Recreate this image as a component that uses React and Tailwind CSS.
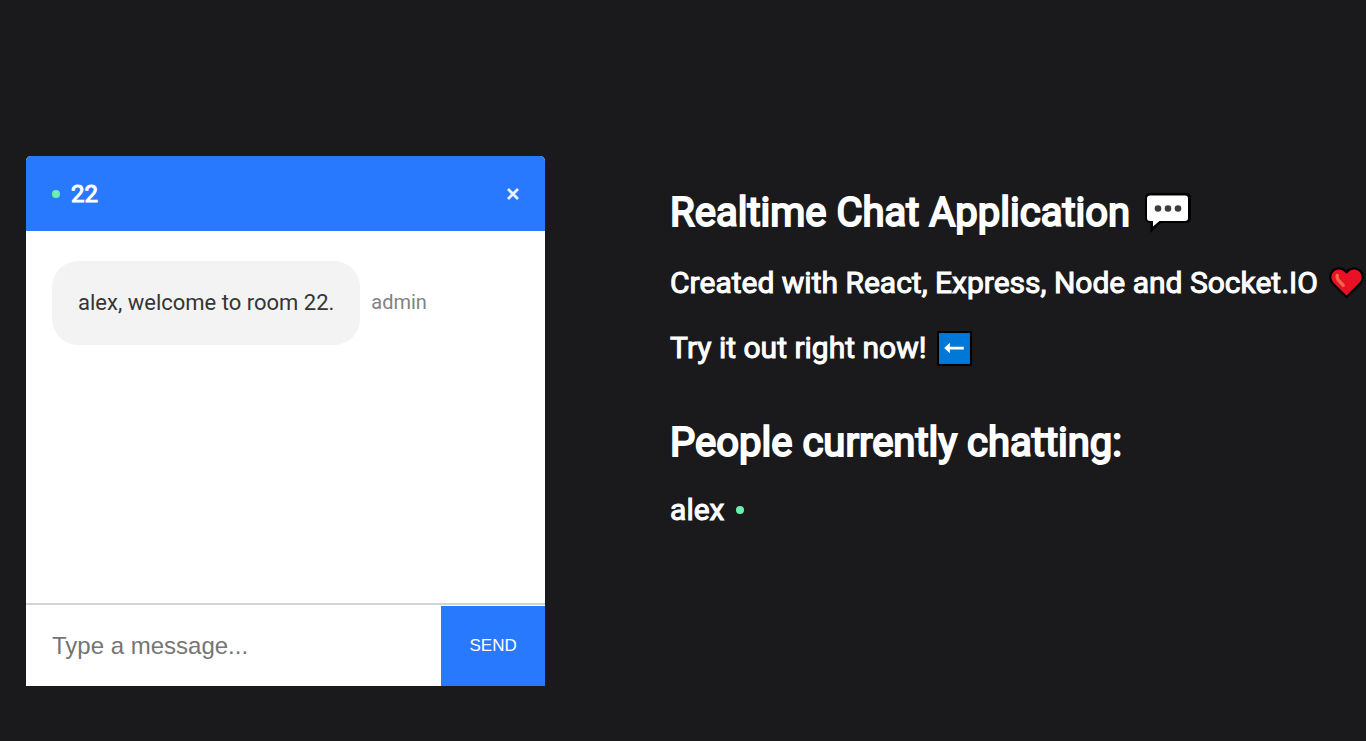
import { useState } from "react";

const people = ["alex"];
const messages = [{ id: 1, user: "admin", text: "alex, welcome to room 22." }];

function OnlineDot() {
  return <span className="size-2 shrink-0 rounded-full bg-[#69f0ae]" />;
}

function CloseIcon() {
  return (
    <svg className="size-3" viewBox="0 0 12 12" fill="none" stroke="#ffffff" strokeOpacity="0.9" strokeWidth="2.8" aria-hidden="true">
      <path d="M1 1l10 10M11 1L1 11" />
    </svg>
  );
}

function SpeechIcon() {
  return (
    <svg className="h-10 w-[46px] shrink-0" viewBox="0 0 46 40" aria-hidden="true">
      <path d="M5 0h36q5 0 5 5v20q0 5-5 5H16L5.500 40V30H5q-5 0-5-5V5q0-5 5-5z" fill="#000000" />
      <path d="M5 2.500h35q3 0 3 3v19.500q0 3-3 3H14.500l-6.500 5.500v-5.500H5q-3 0-3-3V5.500q0-3 3-3z" fill="#ffffff" />
      <g fill="#3b3b3b">
        <circle cx="13" cy="15.500" r="3.300" />
        <circle cx="23" cy="15.500" r="3.300" />
        <circle cx="33" cy="15.500" r="3.300" />
      </g>
    </svg>
  );
}

function HeartIcon() {
  return (
    <svg className="h-8 w-[35px] shrink-0" viewBox="0 0 35 32" aria-hidden="true">
      <path
        d="M17.500 30L3.800 16.500C0 12.500 .8 6.800 4 3.700c4-3.500 9.500-3 13.500 1.600 4-4.600 9.500-5.100 13.500-1.600 3.200 3.100 4 8.800.2 12.800z"
        fill="#e81224"
        stroke="#000000"
        strokeWidth="2.200"
        strokeLinejoin="round"
      />
      <path d="M8.200 8.300q-.6 3.200 1.600 5.400l4.500 4.600" fill="none" stroke="#f4694b" strokeWidth="3.200" strokeLinecap="round" />
    </svg>
  );
}

function ArrowIcon() {
  return (
    <svg className="size-[35px] shrink-0" viewBox="0 0 34 34" aria-hidden="true">
      <rect width="34" height="34" fill="#000000" />
      <rect x="2" y="2" width="30" height="30" fill="#0078d7" />
      <path d="M7 16.500l5.500-5v3.800H26v2.600H12.500v3.600z" fill="#ffffff" />
    </svg>
  );
}

function ChatCard() {
  const [draft, setDraft] = useState("");

  return (
    <section className="flex h-[530px] w-[38vw] shrink-0 flex-col overflow-hidden rounded-t-[5px] bg-white">
      <header className="flex h-[75px] shrink-0 items-center justify-between bg-[#2979ff] px-[26px]">
        <div className="flex items-center gap-[11px]">
          <OnlineDot />
          <h3 className="text-2xl text-white [-webkit-text-stroke:1px_#ffffff]">22</h3>
        </div>
        <button type="button" aria-label="Leave room">
          <CloseIcon />
        </button>
      </header>

      <div className="flex-1 overflow-auto px-[26px] py-[30px]">
        {messages.map((message) => (
          <div key={message.id} className="flex items-center gap-[11px]">
            <p className="flex h-[84px] items-center rounded-[26px] bg-[#f3f3f3] px-[26px] pb-[2px] text-[22px] text-[#353535]">
              {message.text}
            </p>
            <span className="pb-[2px] text-xl text-[#828282]">{message.user}</span>
          </div>
        ))}
      </div>

      <form
        className="flex h-[83px] shrink-0 border-t-2 border-[#d3d3d3] pt-px font-['Liberation_Sans',sans-serif]"
        onSubmit={(event) => event.preventDefault()}
      >
        <input
          type="text"
          aria-label="Message"
          placeholder="Type a message..."
          value={draft}
          onChange={(event) => setDraft(event.target.value)}
          className="w-4/5 px-[26px] text-2xl text-black outline-none placeholder:text-[#757575]"
        />
        <button type="submit" className="w-1/5 bg-[#2979ff] text-[17px] text-white">
          SEND
        </button>
      </form>
    </section>
  );
}

function Intro() {
  return (
    <section className="flex shrink-0 flex-col whitespace-nowrap text-white [-webkit-text-stroke:1px_#ffffff]">
      <h1 className="flex items-center gap-[15px] text-[40px] leading-[50px] [-webkit-text-stroke:2px_#ffffff]">
        Realtime Chat Application
        <SpeechIcon />
      </h1>
      <h2 className="mt-[27px] flex items-center gap-[11px] text-3xl leading-9">
        Created with React, Express, Node and Socket.IO
        <HeartIcon />
      </h2>
      <h2 className="mt-[29px] flex items-center gap-[11px] text-3xl leading-9">
        Try it out right now!
        <ArrowIcon />
      </h2>
      <h1 className="mt-[52px] text-[40px] leading-[50px] [-webkit-text-stroke:2px_#ffffff]">People currently chatting:</h1>
      <ul className="mt-6">
        {people.map((name) => (
          <li key={name} className="flex items-center gap-3 text-3xl leading-9">
            {name}
            <OnlineDot />
          </li>
        ))}
      </ul>
    </section>
  );
}

export default function App() {
  return (
    <main className="flex min-h-screen items-start gap-[125px] overflow-hidden bg-[#1a1a1d] pt-[156px] pl-[26px] font-[Roboto,sans-serif]">
      <ChatCard />
      <div className="pt-8">
        <Intro />
      </div>
    </main>
  );
}
